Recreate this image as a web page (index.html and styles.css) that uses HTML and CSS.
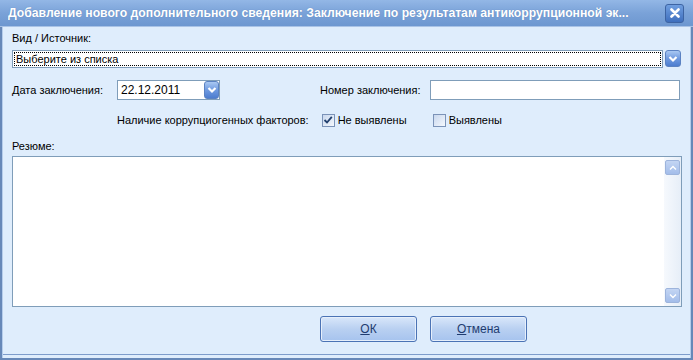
FILE: index.html
```html
<!DOCTYPE html>
<html lang="ru">
<head>
    <meta charset="UTF-8">
    <title>Добавление нового дополнительного сведения</title>
    <link rel="stylesheet" href="styles.css">
</head>
<body>
<div class="window">
    <div class="titleBar">
        <span class="titleText">Добавление нового дополнительного сведения: Заключение по результатам антикоррупционной эк...</span>
        <a class="closeBtn">
            <svg width="10" height="10" viewBox="0 0 10 10"><path d="M1.5 1.5 L8.5 8.5 M8.5 1.5 L1.5 8.5" stroke="#fff" stroke-width="2.6" stroke-linecap="round"/></svg>
        </a>
    </div>
    <div class="content">
        <div class="label">Вид / Источник:</div>
        <div class="comboRow">
            <div class="combo"><span class="focusBox">Выберите из списка</span></div>
            <a class="arrowBtn">
                <svg width="10" height="8" viewBox="0 0 10 8"><path d="M1.5 2 L5 5.5 L8.5 2" fill="none" stroke="#fff" stroke-width="2.2"/></svg>
            </a>
        </div>
        <div class="dateRow">
            <div class="label fieldLabel">Дата заключения:</div>
            <div class="dateBox">
                <span class="dateValue">22.12.2011</span>
                <a class="arrowBtn small">
                    <svg width="10" height="8" viewBox="0 0 10 8"><path d="M1.5 2 L5 5.5 L8.5 2" fill="none" stroke="#fff" stroke-width="2.2"/></svg>
                </a>
            </div>
            <div class="label numLabel">Номер заключения:</div>
            <div class="textBox"></div>
        </div>
        <div class="checkRow">
            <div class="label">Наличие коррупциогенных факторов:</div>
            <label class="check">
                <span class="box">
                    <svg width="10" height="10" viewBox="0 0 10 10"><path d="M1.5 5 L4 7.5 L8.8 1.8" fill="none" stroke="#21406e" stroke-width="1.8"/></svg>
                </span>
                Не выявлены
            </label>
            <label class="check">
                <span class="box"></span>
                Выявлены
            </label>
        </div>
        <div class="label">Резюме:</div>
        <div class="memo">
            <div class="scrollBar">
                <span class="scrollBtn">
                    <svg width="8" height="6" viewBox="0 0 8 6"><path d="M1 4.5 L4 1.5 L7 4.5" fill="none" stroke="#fff" stroke-width="1.4"/></svg>
                </span>
                <span class="scrollBtn">
                    <svg width="8" height="6" viewBox="0 0 8 6"><path d="M1 1.5 L4 4.5 L7 1.5" fill="none" stroke="#fff" stroke-width="1.4"/></svg>
                </span>
            </div>
        </div>
        <div class="buttons">
            <a class="btn"><u>О</u>К</a>
            <a class="btn"><u>О</u>тмена</a>
        </div>
    </div>
</div>
</body>
</html>
```
FILE: styles.css
```css
html, body {
    margin: 0;
    padding: 0;
}

body {
    width: 693px;
    height: 360px;
    overflow: hidden;
    font-family: "Liberation Sans", Arial, sans-serif;
    font-size: 11px;
    color: #000;
}

.window {
    box-sizing: border-box;
    width: 693px;
    height: 360px;
    border: 2px solid #6788b8;
    border-top: none;
    background: #dfedfc;
    display: flex;
    flex-direction: column;
    box-shadow: inset 1px 0 0 #b6cdeb, inset -1px 0 0 #b6cdeb, inset 0 -3px 0 #dfedfc, inset 0 -4px 0 #7d9ccb;
}

.titleBar {
    height: 26px;
    margin: 0 -2px;
    background: linear-gradient(#93b7e6, #7aa2d8 50%, #6d97d0);
    border-bottom: 1px solid #a9c3e6;
    display: flex;
    align-items: center;
    justify-content: space-between;
    padding: 0 9px 0 8px;
}

.titleText {
    color: #fff;
    font-weight: bold;
    font-size: 12.2px;
    white-space: nowrap;
    overflow: hidden;
    text-shadow: 0 0 1px #5a7fb5;
}

.closeBtn {
    box-sizing: border-box;
    width: 19px;
    height: 19px;
    flex: 0 0 19px;
    border: 1px solid #3d64a3;
    border-radius: 3px;
    background: linear-gradient(#6f9ee0, #3f6fbd);
    display: flex;
    align-items: center;
    justify-content: center;
    margin-left: 4px;
}

.content {
    padding: 4px 10px 0 10px;
    display: flex;
    flex-direction: column;
}

.label {
    line-height: 14px;
    white-space: nowrap;
}

.comboRow {
    display: flex;
    margin-top: 5px;
    height: 18px;
}

.combo {
    box-sizing: border-box;
    width: 653px;
    height: 18px;
    background: #fff;
    border: 1px solid #7f9db9;
    padding: 1px;
}

.focusBox {
    box-sizing: border-box;
    display: block;
    height: 14px;
    line-height: 12px;
    border: 1px dotted #000;
    padding-left: 1px;
}

.arrowBtn {
    box-sizing: border-box;
    width: 16px;
    height: 17px;
    margin-left: 2px;
    border: 1px solid #5b82c2;
    border-radius: 3px;
    background: linear-gradient(#a9c8f2, #6f9ae0 50%, #4d7dcf);
    display: flex;
    align-items: center;
    justify-content: center;
}

.dateRow {
    display: flex;
    align-items: center;
    margin-top: 12px;
    height: 20px;
}

.fieldLabel {
    width: 105px;
}

.dateBox {
    box-sizing: border-box;
    width: 103px;
    height: 20px;
    background: #fff;
    border: 1px solid #7f9db9;
    display: flex;
    align-items: center;
    justify-content: space-between;
    padding: 0 0 0 3px;
}

.dateValue {
    font-size: 12px;
}

.arrowBtn.small {
    width: 15px;
    height: 18px;
    margin: 0;
}

.numLabel {
    margin-left: 100px;
    width: 110px;
}

.textBox {
    box-sizing: border-box;
    width: 250px;
    height: 20px;
    background: #fff;
    border: 1px solid #7f9db9;
}

.checkRow {
    display: flex;
    align-items: center;
    margin: 12px 0 0 105px;
    height: 16px;
}

.check {
    display: flex;
    align-items: center;
    margin-left: 13px;
    width: 97px;
}

.box {
    box-sizing: border-box;
    width: 13px;
    height: 13px;
    margin-right: 3px;
    border: 1px solid #7b93b8;
    background: linear-gradient(135deg, #c9d8ee, #f4f8fd);
    display: flex;
    align-items: center;
    justify-content: center;
}

.checkRow > .label + .check + .check {
    margin-left: 14px;
}

.checkRow + .label {
    margin-top: 11px;
}

.memo {
    box-sizing: border-box;
    margin-top: 3px;
    width: 670px;
    height: 151px;
    background: #fff;
    border: 1px solid #7f9db9;
    display: flex;
    justify-content: flex-end;
}

.scrollBar {
    width: 17px;
    background: linear-gradient(90deg, #f6f9fd, #e6eef8);
    display: flex;
    flex-direction: column;
    justify-content: space-between;
    align-items: center;
    padding: 3px 0;
}

.scrollBtn {
    box-sizing: border-box;
    width: 15px;
    height: 15px;
    border: 1px solid #9db4dc;
    border-radius: 2px;
    background: linear-gradient(#c3d5f3, #a3bdea);
    display: flex;
    align-items: center;
    justify-content: center;
}

.buttons {
    display: flex;
    justify-content: flex-start;
    margin: 9px 0 0 308px;
}

.btn {
    box-sizing: border-box;
    width: 97px;
    height: 26px;
    margin-right: 13px;
    border: 1px solid #4b73b5;
    border-radius: 3px;
    background: linear-gradient(#d9e7fa, #b9d0f1 50%, #a6c3ee);
    display: flex;
    align-items: center;
    justify-content: center;
    color: #1f3c70;
    font-size: 12px;
    box-shadow: inset 0 0 0 1px #e6effb;
}
```
